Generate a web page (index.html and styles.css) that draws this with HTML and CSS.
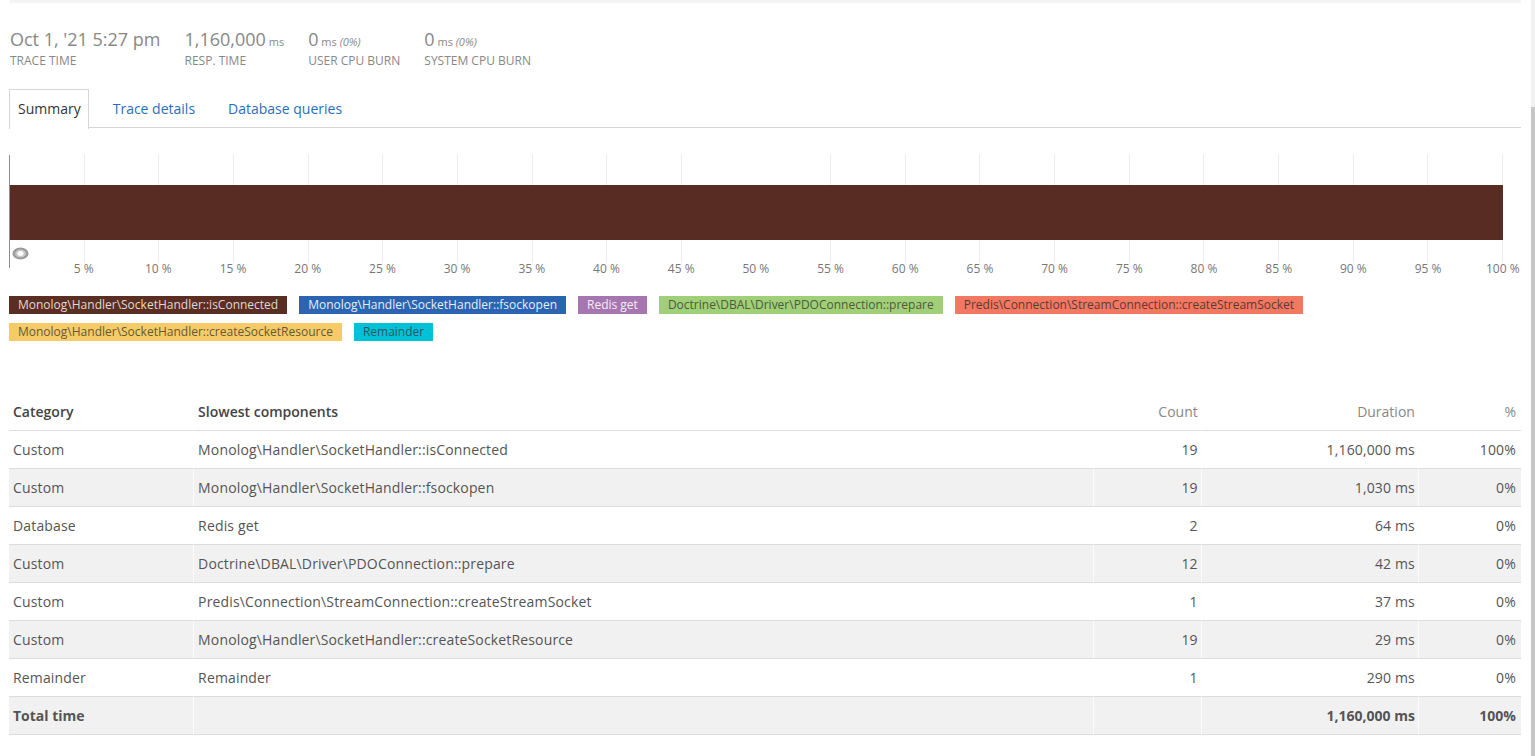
FILE: index.html
```html
<!DOCTYPE html>
<html>
<head>
<meta charset="utf-8">
<link rel="stylesheet" href="styles.css">
</head>
<body>
<div class="page">
  <div class="topbar"></div>
  <div class="stats">
    <div class="stat">
      <div class="value">Oct 1, '21 5:27 pm</div>
      <div class="label">TRACE TIME</div>
    </div>
    <div class="stat">
      <div class="value">1,160,000<span class="unit"> ms</span></div>
      <div class="label">RESP. TIME</div>
    </div>
    <div class="stat">
      <div class="value">0<span class="unit"> ms <em>(0%)</em></span></div>
      <div class="label">USER CPU BURN</div>
    </div>
    <div class="stat">
      <div class="value">0<span class="unit"> ms <em>(0%)</em></span></div>
      <div class="label">SYSTEM CPU BURN</div>
    </div>
  </div>

  <div class="tabs">
    <div class="tab active">Summary</div>
    <div class="tab">Trace details</div>
    <div class="tab">Database queries</div>
  </div>

  <div class="chart">
    <div class="bar"></div>
    <svg class="marker" width="17" height="13" viewBox="0 0 17 13">
      <ellipse cx="8.5" cy="6.5" rx="8" ry="6" fill="#9a9a9a"/>
      <ellipse cx="8.5" cy="6.5" rx="5.5" ry="4" fill="#c8c8c8"/>
      <ellipse cx="8.5" cy="6.5" rx="3" ry="2.5" fill="#ffffff"/>
    </svg>
  </div>
  <div class="axis">
    <span>5 %</span><span>10 %</span><span>15 %</span><span>20 %</span><span>25 %</span>
    <span>30 %</span><span>35 %</span><span>40 %</span><span>45 %</span><span>50 %</span>
    <span>55 %</span><span>60 %</span><span>65 %</span><span>70 %</span><span>75 %</span>
    <span>80 %</span><span>85 %</span><span>90 %</span><span>95 %</span><span>100 %</span>
  </div>

  <div class="legend">
    <span class="item c1">Monolog\Handler\SocketHandler::isConnected</span>
    <span class="item c2">Monolog\Handler\SocketHandler::fsockopen</span>
    <span class="item c3">Redis get</span>
    <span class="item c4">Doctrine\DBAL\Driver\PDOConnection::prepare</span>
    <span class="item c5">Predis\Connection\StreamConnection::createStreamSocket</span>
    <span class="item c6">Monolog\Handler\SocketHandler::createSocketResource</span>
    <span class="item c7">Remainder</span>
  </div>

  <table class="summary">
    <thead>
      <tr>
        <th class="col-cat">Category</th>
        <th class="col-comp">Slowest components</th>
        <th class="num col-count">Count</th>
        <th class="num col-dur">Duration</th>
        <th class="num col-pct">%</th>
      </tr>
    </thead>
    <tbody>
      <tr><td>Custom</td><td>Monolog\Handler\SocketHandler::isConnected</td><td class="num">19</td><td class="num">1,160,000 ms</td><td class="num">100%</td></tr>
      <tr><td>Custom</td><td>Monolog\Handler\SocketHandler::fsockopen</td><td class="num">19</td><td class="num">1,030 ms</td><td class="num">0%</td></tr>
      <tr><td>Database</td><td>Redis get</td><td class="num">2</td><td class="num">64 ms</td><td class="num">0%</td></tr>
      <tr><td>Custom</td><td>Doctrine\DBAL\Driver\PDOConnection::prepare</td><td class="num">12</td><td class="num">42 ms</td><td class="num">0%</td></tr>
      <tr><td>Custom</td><td>Predis\Connection\StreamConnection::createStreamSocket</td><td class="num">1</td><td class="num">37 ms</td><td class="num">0%</td></tr>
      <tr><td>Custom</td><td>Monolog\Handler\SocketHandler::createSocketResource</td><td class="num">19</td><td class="num">29 ms</td><td class="num">0%</td></tr>
      <tr><td>Remainder</td><td>Remainder</td><td class="num">1</td><td class="num">290 ms</td><td class="num">0%</td></tr>
      <tr class="total"><td>Total time</td><td></td><td class="num"></td><td class="num">1,160,000 ms</td><td class="num">100%</td></tr>
    </tbody>
  </table>
</div>
<div class="scrollbar"><div class="thumb"></div></div>
</body>
</html>
```

FILE: styles.css
```css
html, body {
  margin: 0;
  padding: 0;
  background: #ffffff;
  overflow: hidden;
}
body {
  font-family: "Open Sans", "DejaVu Sans", sans-serif;
  color: #555;
  height: 756px;
}
.page {
  width: 1512px;
  padding-left: 9px;
}
.topbar {
  height: 3px;
  margin-left: 1px;
  background: #f4f4f4;
}

/* stats */
.stats {
  display: flex;
  gap: 24px;
  padding-left: 1px;
  margin-top: 24px;
}
.stat .value {
  font-size: 18px;
  line-height: 24px;
  height: 24px;
  color: #888;
  white-space: nowrap;
}
.stat .unit {
  font-size: 11px;
  line-height: 1;
  color: #888;
}
.stat .unit em {
  font-style: italic;
}
.stat .label {
  font-size: 12px;
  line-height: 14px;
  margin-top: 3px;
  color: #888;
}

/* tabs */
.tabs {
  display: flex;
  margin-top: 21px;
  border-bottom: 1px solid #d6d6d6;
  height: 38px;
}
.tab {
  font-size: 14px;
  line-height: 38px;
  padding: 0 8px;
  margin-right: 15px;
  color: #2a6ebb;
  border: 1px solid transparent;
  border-bottom: none;
}
.tab.active {
  color: #333;
  border-color: #d6d6d6;
  background: #fff;
  height: 39px;
  padding: 0 7px 0 8px;
}

/* chart */
.chart {
  margin-top: 27px;
  padding-top: 30px;
  width: 1494px;
  height: 113px;
  border-left: 1px solid #8f8f8f;
  background-image: repeating-linear-gradient(to right, transparent 0, transparent calc(5% - 1px), #ececec calc(5% - 1px), #ececec 5%);
  background-size: 100% 108px;
  background-repeat: no-repeat;
  box-sizing: border-box;
}
.bar {
  height: 55px;
  width: 100%;
  background: #582c22;
}
.marker {
  display: block;
  margin-top: 7px;
  margin-left: 2px;
}
.axis {
  display: flex;
  padding-left: 37.35px;
  margin-top: -7px;
  font-size: 12px;
  line-height: 16px;
  color: #777;
}
.axis span {
  flex: 0 0 74.7px;
  text-align: center;
  white-space: nowrap;
}

/* legend */
.legend {
  display: flex;
  flex-wrap: wrap;
  column-gap: 12px;
  row-gap: 9px;
  margin-top: 19px;
  width: 1400px;
}
.item {
  font-size: 12px;
  line-height: 18px;
  height: 18px;
  padding: 0 9px;
  white-space: nowrap;
}
.c1 { background: #5a2e22; color: #e0d8d5; }
.c2 { background: #2b64b1; color: #e6eef8; }
.c3 { background: #a676b1; color: #f4eef6; }
.c4 { background: #a1cf78; color: #4b5a40; }
.c5 { background: #f27862; color: #5b3b35; }
.c6 { background: #f5cb68; color: #66583a; }
.c7 { background: #00c1d8; color: #2e5660; }

/* table */
.summary {
  margin-top: 52px;
  width: 1512px;
  border-collapse: separate;
  border-spacing: 0;
  font-size: 14px;
  color: #555;
  table-layout: fixed;
}
.summary th, .summary td {
  height: 37px;
  padding: 0 3px 0 4px;
  border-bottom: 1px solid #dcdcdc;
  text-align: left;
  white-space: nowrap;
  vertical-align: middle;
}
.summary td {
  letter-spacing: 0.15px;
}
.summary th + th, .summary td + td {
  border-left: 1px solid rgba(255, 255, 255, 0.7);
}
.summary th {
  font-weight: 600;
  color: #444;
}
.summary th.num {
  font-weight: 400;
  color: #888;
}
.summary .num {
  text-align: right;
}
.col-cat { width: 177px; }
.col-comp { width: 891px; }
.col-count { width: 100px; }
.col-dur { width: 209px; }
.col-pct { width: 93px; }
.summary td:last-child, .summary th:last-child { padding-right: 5px; }
.summary tbody tr:nth-child(even) td {
  background: #f1f1f1;
}
.summary tr.total td {
  font-weight: 700;
  color: #555;
  letter-spacing: 0;
}

/* fake scrollbar */
.scrollbar {
  position: absolute;
  top: 0;
  right: 0;
  width: 4px;
  height: 756px;
  background: #f1f1f1;
}
.thumb {
  margin-top: 107px;
  height: 649px;
  background: #c6c6c6;
}
```
